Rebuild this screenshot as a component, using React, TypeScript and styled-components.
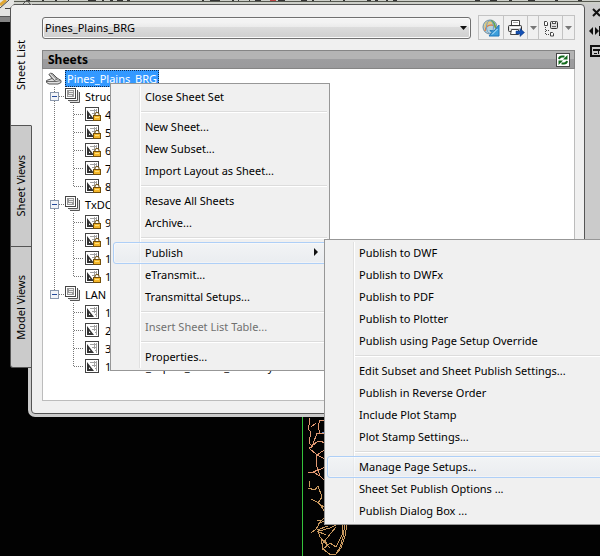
import React from "react";
import styled, { createGlobalStyle, css } from "styled-components";

const GlobalStyle = createGlobalStyle`
  * { box-sizing: border-box; }
  html, body { margin: 0; padding: 0; background: #000; }
  body, button, select {
    font-family: "Noto Sans", "Open Sans", sans-serif;
    font-size: 11px;
    color: #000;
  }
  button { margin: 0; padding: 0; border: 0; background: none; text-align: left; }
  ul { list-style: none; margin: 0; padding: 0; }
  svg { display: block; flex: none; }
`;

const Desktop = styled.div`
  position: relative;
  min-height: 100vh;
  overflow: hidden;
  background: #020202;
`;

const TopStrip = styled.div`
  position: relative;
  z-index: 2;
  height: 4px;
  overflow: hidden;
  background: #cdcfc9;
`;

const CornerArt = styled.svg`
  position: absolute;
  left: 0;
  top: 0;
  z-index: 3;
`;

const DrawingArt = styled.svg`
  position: absolute;
  left: 300px;
  top: 417px;
`;

const Palette = styled.main`
  position: relative;
  display: grid;
  grid-template-columns: 21px minmax(0, 1fr) 15px;
  margin-left: 10px;
`;

const Tabs = styled.nav`
  position: relative;
  z-index: 1;
  display: flex;
  flex-direction: column;
  align-self: start;
`;

const Tab = styled.button<{ $active?: boolean }>`
  display: flex;
  align-items: center;
  justify-content: center;
  height: 121px;
  border: 1px solid #555;
  border-top-width: ${(p) => (p.$active ? "1px" : "0")};
  background: #cbcbcb;
  margin-right: -1px;
  &:last-child { border-bottom-left-radius: 3px; }
  ${(p) =>
    p.$active &&
    css`
      background: #f0f0f0;
      border-right-color: #f0f0f0;
      border-bottom-color: #555;
      border-top-left-radius: 5px;
      height: 122px;
    `}
`;

const TabLabel = styled.span`
  writing-mode: vertical-rl;
  transform: rotate(180deg);
  line-height: 16px;
  white-space: nowrap;
`;

const Panel = styled.section`
  display: flex;
  flex-direction: column;
  gap: 10px;
  padding: 10px 9px 12px 10px;
  border: 1px solid #555;
  border-radius: 0 4px 0 4px;
  background: #f0f0f0;
  box-shadow: 0 0 0 3px #cbcbcb;
`;

const Toolbar = styled.div`
  display: flex;
  align-items: center;
  gap: 7px;
`;

const ComboBox = styled.label`
  position: relative;
  flex: 1;
  display: flex;
`;

const Combo = styled.select`
  appearance: none;
  width: 100%;
  height: 22px;
  padding: 0 20px 0 2px;
  border: 1px solid #707070;
  border-radius: 3px;
  background: linear-gradient(#f3f3f3 0 20%, #ebebeb 45%, #dcdcdc 46%, #cfcfcf);
  box-shadow: inset 0 0 0 1px #fafafa;
  outline: none;
`;

const ComboArrow = styled.svg`
  position: absolute;
  right: 4px;
  top: 9px;
  pointer-events: none;
`;

const ButtonGroup = styled.div`
  display: flex;
  height: 25px;
  border: 1px solid #c3c3c3;
`;

const ToolButton = styled.button<{ $w: number; $divided?: boolean }>`
  display: flex;
  align-items: center;
  justify-content: center;
  width: ${(p) => p.$w}px;
  border-right: ${(p) => (p.$divided ? "1px solid #c3c3c3" : "0")};
`;

const SheetsBox = styled.div`
  border: 1px solid #bcbcbc;
  border-top: 0;
  background: #fff;
`;

const SheetsHeader = styled.header`
  display: flex;
  align-items: center;
  justify-content: space-between;
  height: 19px;
  margin: 0 -1px;
  padding: 0 4px 0 5px;
  border: 1px solid #858585;
  background: linear-gradient(#b4b4b4 0 45%, #9d9d9f 46%, #9a9a9c);
`;

const SheetsTitle = styled.h2`
  margin: 0;
  font-size: 12px;
  line-height: 16px;
`;

const RefreshButton = styled.button`
  width: 14px;
  height: 14px;
  border: 1px solid #444;
  background: #fff;
`;

const Tree = styled.ul`
  padding-bottom: 25px;
`;

const TreeRow = styled.li`
  display: flex;
  align-items: center;
  height: 18px;
  padding-left: 2px;
  overflow: hidden;
  white-space: nowrap;
`;

const TreeLabel = styled.span<{ $selected?: boolean }>`
  margin-left: 2px;
  padding: 0 2px;
  line-height: 17px;
  ${(p) =>
    p.$selected &&
    css`
      margin-left: 3px;
      padding: 0 1px;
      line-height: 15px;
      border: 1px dotted #10294a;
      background: #3399ff;
      color: #fff;
    `}
`;

const SideBar = styled.aside`
  display: flex;
  flex-direction: column;
  align-items: flex-end;
  gap: 9px;
  padding-top: 4px;
  background: #cbcbcb;
  overflow: hidden;
`;

const Menu = styled.ul`
  position: absolute;
  padding: 2px;
  border: 1px solid #979797;
  background: linear-gradient(90deg, transparent 28px, #e1e1e1 28px 29px, #fff 29px 30px, transparent 30px), #f0f0f0;
  background-size: 100% calc(100% - 4px), auto;
  background-position: 0 2px, 0 0;
  background-repeat: no-repeat, repeat;
`;

const ContextMenu = styled(Menu)`
  left: 110px;
  top: 83px;
  width: 220px;
  z-index: 4;
`;

const SubMenu = styled(Menu)`
  left: 324px;
  right: -6px;
  top: 239px;
  z-index: 5;
`;

const MenuButton = styled.button<{ $hot?: boolean }>`
  display: flex;
  align-items: center;
  justify-content: space-between;
  width: 100%;
  height: 22px;
  padding: 0 8px 2px 31px;
  border: 1px solid transparent;
  border-radius: 3px;
  white-space: nowrap;
  &:disabled { color: #707070; }
  ${(p) =>
    p.$hot &&
    css`
      border-color: #aecff7;
      box-shadow: inset 0 0 0 1px rgba(255, 255, 255, 0.4);
      background: linear-gradient(rgba(244, 247, 250, 0.5), rgba(228, 233, 240, 0.5));
    `}
`;

const Separator = styled.li`
  height: 2px;
  margin: 3px 0 3px 28px;
  border-top: 1px solid #dcdcdc;
  border-bottom: 1px solid #fff;
`;

type Row = { kind: "subset" | "locked" | "sheet"; text: string; last?: boolean; trunk?: boolean };

const rows: Row[] = [
  { kind: "subset", text: "Struc", trunk: true },
  { kind: "locked", text: "4", trunk: true },
  { kind: "locked", text: "5", trunk: true },
  { kind: "locked", text: "6", trunk: true },
  { kind: "locked", text: "7", trunk: true },
  { kind: "locked", text: "8", trunk: true, last: true },
  { kind: "subset", text: "TxDOT", trunk: true },
  { kind: "locked", text: "9", trunk: true },
  { kind: "locked", text: "1", trunk: true },
  { kind: "locked", text: "1", trunk: true },
  { kind: "locked", text: "1", trunk: true, last: true },
  { kind: "subset", text: "LAN", last: true },
  { kind: "sheet", text: "1" },
  { kind: "sheet", text: "2" },
  { kind: "sheet", text: "3" },
  { kind: "sheet", text: "1 - Land_Export_Sheets_Territory", last: true },
];

const Guides = ({ row }: { row: Row }) => {
  const subset = row.kind === "subset";
  return (
    <svg width={subset ? 20 : 39} height="18" shapeRendering="crispEdges" aria-hidden="true">
      <g stroke="#777" strokeDasharray="1 1" fill="none">
        {(row.trunk || subset) && <path d={`M9.5 0V${row.trunk ? 18 : 9}`} />}
        {subset ? <path d="M14 9.5H20" /> : <path d={`M28.5 0V${row.last ? 10 : 18}M29 9.5H39`} />}
      </g>
      {subset && (
        <>
          <rect x="5.5" y="5.5" width="8" height="8" fill="#f2f4f8" stroke="#8a98ad" />
          <path d="M7 9.5H12" stroke="#234a9a" />
        </>
      )}
    </svg>
  );
};

const SubsetIcon = () => (
  <svg width="16" height="16" aria-hidden="true">
    <path d="M5 14.5H14.5V4M3 12.5H12.5V2" fill="none" stroke="#555" />
    <path d="M4 13.5H13.5V3" fill="none" stroke="#ddd" />
    <rect x="0.5" y="0.5" width="10" height="10" fill="#fff" stroke="#444" />
    <rect x="2" y="2" width="7" height="7" fill="#999" />
    <path d="M4 3.5H8M4 5.5H8M3 7.5H7" stroke="#eee" />
  </svg>
);

const SheetIcon = ({ locked }: { locked?: boolean }) => (
  <svg width="17" height="16" aria-hidden="true">
    <rect x="1.5" y="1.5" width="13" height="13" fill="#fff" stroke="#444" />
    <path d="M3 4V13H10ZM5 9V11H6.5Z" fill="#333" fillRule="evenodd" />
    <path d="M6 4.5H13M10.5 3V9M8 7.5H13M12.500 3V13M11 10.500H13" stroke="#a2a2a2" fill="none" />
    {locked && (
      <>
        <path d="M11 10V8Q11 6.500 13 6.500T15 8V10" stroke="#6b4a08" fill="#fff" />
        <rect x="9.5" y="9.5" width="7" height="5" fill="#f5b72a" stroke="#74500a" />
        <path d="M11 11.5H15" stroke="#ffe27a" />
      </>
    )}
  </svg>
);

const SheetSetIcon = () => (
  <svg width="17" height="16" aria-hidden="true">
    <path d="M1.500 10.500L7 8.500L4 4.500Q5 2.500 7.500 3.500L12 8L16 10.500V12.500L13 14H4L1.500 12.500Z" fill="#e2e2e2" stroke="#555" />
    <path d="M4 4.500L9.500 10.500M6.500 4L12.500 10M2 11.500H11L16 10.500M7 8.500L9.500 10.500L12 9" fill="none" stroke="#6a6a6a" />
  </svg>
);

const DropArrow = ({ color }: { color: string }) => (
  <svg width="7" height="4" aria-hidden="true"><path d="M0 0H7L3.500 4Z" fill={color} /></svg>
);

const GlobeIcon = () => (
  <svg width="18" height="18" aria-hidden="true">
    <circle cx="8" cy="8" r="7" fill="#b5d3dc" stroke="#718c9c" />
    <path d="M3 4Q7 0 12 3L10 5L7 4.500L4 8L2 9Z" fill="#e2c777" />
    <path d="M3 12Q4 6 9 6T14 10" fill="none" stroke="#dd8147" strokeWidth="1.500" />
    <path d="M9 1.500Q13 4 13.500 9" fill="none" stroke="#63a84b" strokeWidth="1.500" />
    <ellipse cx="8" cy="8" rx="3.500" ry="6.500" fill="none" stroke="#6f9cc9" />
    <path d="M17 6V17H7L10 13.500L8 11.500L12 12Z" fill="#3c9fdc" stroke="#1d75b8" />
    <path d="M10 15.500L15.500 10" stroke="#c9ecff" />
  </svg>
);

const PrinterIcon = () => (
  <svg width="18" height="18" aria-hidden="true">
    <path d="M4.500 6.500V1.500H12.500V6.500" fill="#fff" stroke="#444" />
    <path d="M6 3.500H11" stroke="#aaa" />
    <rect x="1.500" y="6.500" width="13" height="6" rx="1" fill="#e2e2e2" stroke="#333" />
    <path d="M3 8.500H13" stroke="#fff" />
    <path d="M4.500 10.500H11.500V15.500H3.500Z" fill="#fff" stroke="#444" />
    <path d="M9 12H13V9.500L17.500 13.500L13 17.500V15H9Z" fill="#1551b5" stroke="#0a3478" strokeWidth="0.5" />
  </svg>
);

const ViewIcon = () => (
  <svg width="16" height="18" aria-hidden="true">
    <path d="M1.500 2.500H3.500L4.500 3.500V6.500H1.500ZM7.500 13.500H9.500L10.500 14.500V17H7.500Z" fill="#fff" stroke="#444" />
    <rect x="7.500" y="2.500" width="7" height="7" rx="1" fill="#ddd" stroke="#333" />
    <rect x="9.500" y="2.500" width="3" height="2" fill="#fff" stroke="#555" />
    <path d="M9 7.500H13" stroke="#666" />
    <path d="M2.500 8V16M3 15.500H7M3 11.500H7" stroke="#444" strokeDasharray="1 1" shapeRendering="crispEdges" />
  </svg>
);

const RefreshIcon = () => (
  <svg width="12" height="12" aria-hidden="true">
    <path d="M2 5Q2.500 2.500 5 2.500H7.500" fill="none" stroke="#126a1c" strokeWidth="2" />
    <path d="M10.500 1V5.500H6Z" fill="#126a1c" />
    <path d="M10 7Q9.500 9.500 7 9.500H4.500" fill="none" stroke="#126a1c" strokeWidth="2" />
    <path d="M1.500 11V6.500H6Z" fill="#126a1c" />
  </svg>
);

type Item = { text: string; hot?: boolean; disabled?: boolean; sub?: boolean } | null;

const contextItems: Item[] = [
  { text: "Close Sheet Set" },
  null,
  { text: "New Sheet..." },
  { text: "New Subset..." },
  { text: "Import Layout as Sheet..." },
  null,
  { text: "Resave All Sheets" },
  { text: "Archive..." },
  null,
  { text: "Publish", hot: true, sub: true },
  { text: "eTransmit..." },
  { text: "Transmittal Setups..." },
  null,
  { text: "Insert Sheet List Table...", disabled: true },
  null,
  { text: "Properties..." },
];

const publishItems: Item[] = [
  { text: "Publish to DWF" },
  { text: "Publish to DWFx" },
  { text: "Publish to PDF" },
  { text: "Publish to Plotter" },
  { text: "Publish using Page Setup Override" },
  null,
  { text: "Edit Subset and Sheet Publish Settings..." },
  { text: "Publish in Reverse Order" },
  { text: "Include Plot Stamp" },
  { text: "Plot Stamp Settings..." },
  null,
  { text: "Manage Page Setups...", hot: true },
  { text: "Sheet Set Publish Options ..." },
  { text: "Publish Dialog Box ..." },
];

const renderItems = (items: Item[]) =>
  items.map((item, i) =>
    item ? (
      <li key={i}>
        <MenuButton $hot={item.hot} disabled={item.disabled}>
          {item.text}
          {item.sub && (
            <svg width="4" height="8" aria-hidden="true"><path d="M0 0L4 4L0 8Z" fill="#111" /></svg>
          )}
        </MenuButton>
      </li>
    ) : (
      <Separator key={i} role="separator" />
    )
  );

export default function App() {
  return (
    <>
      <GlobalStyle />
      <Desktop>
        <TopStrip>
          <svg width="100%" height="4" shapeRendering="crispEdges" aria-hidden="true">
            <path d="M26 .5H30M42 .5H44M55 .5H57M68 .5H69M88 .5H96M102 .5H104M110 .5H113M117 .5H123M127 .5H130M202 .5H204M210 .5H220M232 .5H234M238 .5H239M249 .5H250M255 .5H261M278 .5H285M301 .5H307M312 .5H314M330 .5H331M343 .5H345M367 .5H371M375 .5H378M386 .5H388M393 .5H397M475 .5H480M490 .5H497M509 .5H512M528 .5H535M555 .5H558M578 .5H582" stroke="#333" />
            <path d="M270 .5H276" stroke="#b44" />
            <path d="M14 1.500H1600" stroke="#55584f" />
          </svg>
        </TopStrip>
        <CornerArt width="34" height="22" aria-hidden="true">
          <path d="M0 0H14V4L10 8V16H0Z" fill="#e4e4e2" />
          <path d="M0 5L6 0" stroke="#e0a733" strokeWidth="3" />
          <path d="M0 8L9 0M5 8.500H10" stroke="#444" fill="none" />
          <path d="M0 16.500H10" stroke="#555" />
          <path d="M0 19.500H10" stroke="#858585" strokeWidth="5" />
          <path d="M23 4L27 0L30 4" stroke="#555" fill="none" />
        </CornerArt>
        <DrawingArt width="60" height="139" shapeRendering="crispEdges" aria-hidden="true">
          <path d="M2.500 0V139" stroke="#35c23b" />
          <g fill="none" stroke="#e09872">
            <path d="M9 1L10 5L8 11L11 16L9 25L12 30L9 31L17 38L16 46L18 53L13 55L8 55M20 3H27M20 3L18 9L20 17M11 10L16 6M12 30L17 16L27 17M12 29L18 24L27 26M17 38L27 31M17 38L27 43M18 53L26 50M18 53L20 59L27 66M13 55L20 59" />
          </g>
          <g fill="none" stroke="#c9995f">
            <path d="M9 64V70M8 71L15 73L18 69L22 80L18 86L27 92M11 82L19 86L27 98M27 98L21 104L17 103M21 104L16 112L11 116M17 114L26 118M18 107L26 103" />
            <path d="M17 113L28 109M18 113L20 120L30 131M19 114L30 111L40 106M22 127L36 110M21 122L23 132L31 138L36 137L40 130L43 120L45 107M43 108L42 118L36 130L30 126L22 133M47 107L45 119L41 131L37 136M21 122L27 126" />
          </g>
          <path d="M22 15H27" stroke="#6184bd" />
        </DrawingArt>

        <Palette>
          <Tabs>
            <Tab $active><TabLabel>Sheet List</TabLabel></Tab>
            <Tab><TabLabel>Sheet Views</TabLabel></Tab>
            <Tab><TabLabel>Model Views</TabLabel></Tab>
          </Tabs>
          <Panel>
            <Toolbar>
              <ComboBox>
                <Combo aria-label="Sheet set" defaultValue="Pines_Plains_BRG">
                  <option>Pines_Plains_BRG</option>
                </Combo>
                <ComboArrow width="7" height="4" aria-hidden="true"><path d="M0 0H7L3.500 4Z" fill="#111" /></ComboArrow>
              </ComboBox>
              <ButtonGroup>
                <ToolButton $w={25} $divided aria-label="Publish to DWF"><GlobeIcon /></ToolButton>
                <ToolButton $w={24} $divided aria-label="Publish"><PrinterIcon /></ToolButton>
                <ToolButton $w={11} $divided aria-label="Publish options"><DropArrow color="#777" /></ToolButton>
                <ToolButton $w={24} $divided aria-label="Sheet selections"><ViewIcon /></ToolButton>
                <ToolButton $w={11} aria-label="Sheet selection options"><DropArrow color="#777" /></ToolButton>
              </ButtonGroup>
            </Toolbar>
            <SheetsBox>
              <SheetsHeader>
                <SheetsTitle>Sheets</SheetsTitle>
                <RefreshButton aria-label="Refresh"><RefreshIcon /></RefreshButton>
              </SheetsHeader>
              <Tree>
                <TreeRow>
                  <SheetSetIcon />
                  <TreeLabel $selected>Pines_Plains_BRG</TreeLabel>
                </TreeRow>
                {rows.map((row, i) => (
                  <TreeRow key={i}>
                    <Guides row={row} />
                    {row.kind === "subset" ? <SubsetIcon /> : <SheetIcon locked={row.kind === "locked"} />}
                    <TreeLabel>{row.text}</TreeLabel>
                  </TreeRow>
                ))}
              </Tree>
            </SheetsBox>
          </Panel>
          <SideBar>
            <svg width="8" height="9" aria-hidden="true"><path d="M1 1L8 8M8 1L1 8" stroke="#111" strokeWidth="2" /></svg>
            <svg width="12" height="10" aria-hidden="true"><path d="M5 1V9L1 5ZM7 1V9L11 5Z" fill="#111" /><path d="M11.500 0V10" stroke="#111" /></svg>
            <svg width="10" height="12" shapeRendering="crispEdges" aria-hidden="true">
              <path d="M10 1H1V11H10M3 4.500H10" fill="none" stroke="#111" strokeWidth="2" />
              <path d="M4 8.500H7M8.500 5V9" stroke="#111" />
            </svg>
          </SideBar>
        </Palette>

        <ContextMenu>{renderItems(contextItems)}</ContextMenu>
        <SubMenu>{renderItems(publishItems)}</SubMenu>
      </Desktop>
    </>
  );
}
